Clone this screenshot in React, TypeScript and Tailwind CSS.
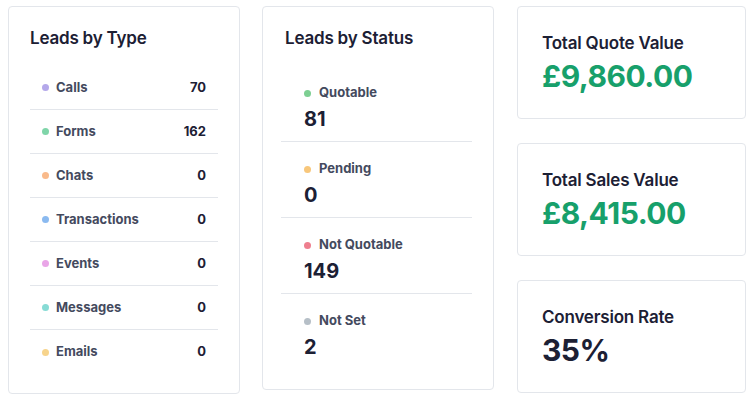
import type { ReactNode } from 'react'

const FONT = { fontFamily: 'Inter, "Noto Sans", "Liberation Sans", sans-serif' }

const BY_TYPE = [
  { label: 'Calls', value: 70, dot: 'bg-[#b4a8ea]' },
  { label: 'Forms', value: 162, dot: 'bg-[#7fd5a9]' },
  { label: 'Chats', value: 0, dot: 'bg-[#f9ba8b]' },
  { label: 'Transactions', value: 0, dot: 'bg-[#8bbaf0]' },
  { label: 'Events', value: 0, dot: 'bg-[#e9a5e7]' },
  { label: 'Messages', value: 0, dot: 'bg-[#87dbd5]' },
  { label: 'Emails', value: 0, dot: 'bg-[#f7d48c]' },
]

const BY_STATUS = [
  { label: 'Quotable', value: 81, dot: 'bg-[#7dcf92]' },
  { label: 'Pending', value: 0, dot: 'bg-[#f8c77b]' },
  { label: 'Not Quotable', value: 149, dot: 'bg-[#ee7f8f]' },
  { label: 'Not Set', value: 2, dot: 'bg-[#b6bfc7]' },
]

function Card({ className, children }: { className: string; children: ReactNode }) {
  return (
    <div className={`rounded-[4px] border border-[#e3e6eb] bg-white ${className}`}>{children}</div>
  )
}

function Title({ children }: { children: ReactNode }) {
  return (
    <h2 className="text-[17px] font-semibold leading-[22px] tracking-[-0.2px] text-[#1c2034]">
      {children}
    </h2>
  )
}

function Stat({ title, value, green }: { title: string; value: string; green?: boolean }) {
  return (
    <Card className="h-[113px] pl-[24px] pt-[25px]">
      <Title>{title}</Title>
      <div
        className={`mt-[4px] text-[30px] font-bold leading-[36px] tracking-[-0.5px] ${
          green ? 'text-[#17a06b]' : 'text-[#1c2034]'
        }`}
      >
        {value}
      </div>
    </Card>
  )
}

export default function App() {
  return (
    <div style={FONT} className="flex h-[401px] w-[754px] items-start bg-white pl-[8px] pt-[6px]">
      <Card className="w-[232px] px-[21px] pb-[19px] pt-[20px]">
        <Title>Leads by Type</Title>
        <ul className="mt-[17px]">
          {BY_TYPE.map((r, i) => (
            <li
              key={r.label}
              className={`flex h-[44px] items-center px-[12px] ${
                i < BY_TYPE.length - 1 ? 'border-b border-[#e3e6eb]' : ''
              }`}
            >
              <span className={`mr-[7px] h-[7px] w-[7px] rounded-full ${r.dot}`} />
              <span className="flex-1 text-[13px] font-bold text-[#444a5e]">{r.label}</span>
              <span className="text-[13px] font-bold text-[#1c2034]">{r.value}</span>
            </li>
          ))}
        </ul>
      </Card>

      <Card className="ml-[22px] w-[232px] px-[21px] pb-[19px] pt-[20px]">
        <div className="pl-[1px]">
          <Title>Leads by Status</Title>
        </div>
        <ul className="-ml-[3px] mt-[17px]">
          {BY_STATUS.map((r, i) => (
            <li
              key={r.label}
              className={`pl-[23px] pt-[18px] ${
                i < BY_STATUS.length - 1 ? 'border-b border-[#e3e6eb] pb-[9px]' : 'pb-[10px]'
              }`}
            >
              <div className="flex h-[18px] items-center">
                <span className={`mr-[8px] h-[7px] w-[7px] rounded-full ${r.dot}`} />
                <span className="text-[13px] font-bold text-[#444a5e]">{r.label}</span>
              </div>
              <div className="mt-[4px] text-[20px] font-bold leading-[26px] text-[#1c2034]">
                {r.value}
              </div>
            </li>
          ))}
        </ul>
      </Card>

      <div className="ml-[23px] flex w-[229px] flex-col gap-[24px]">
        <Stat title="Total Quote Value" value="£9,860.00" green />
        <Stat title="Total Sales Value" value="£8,415.00" green />
        <Stat title="Conversion Rate" value="35%" />
      </div>
    </div>
  )
}
